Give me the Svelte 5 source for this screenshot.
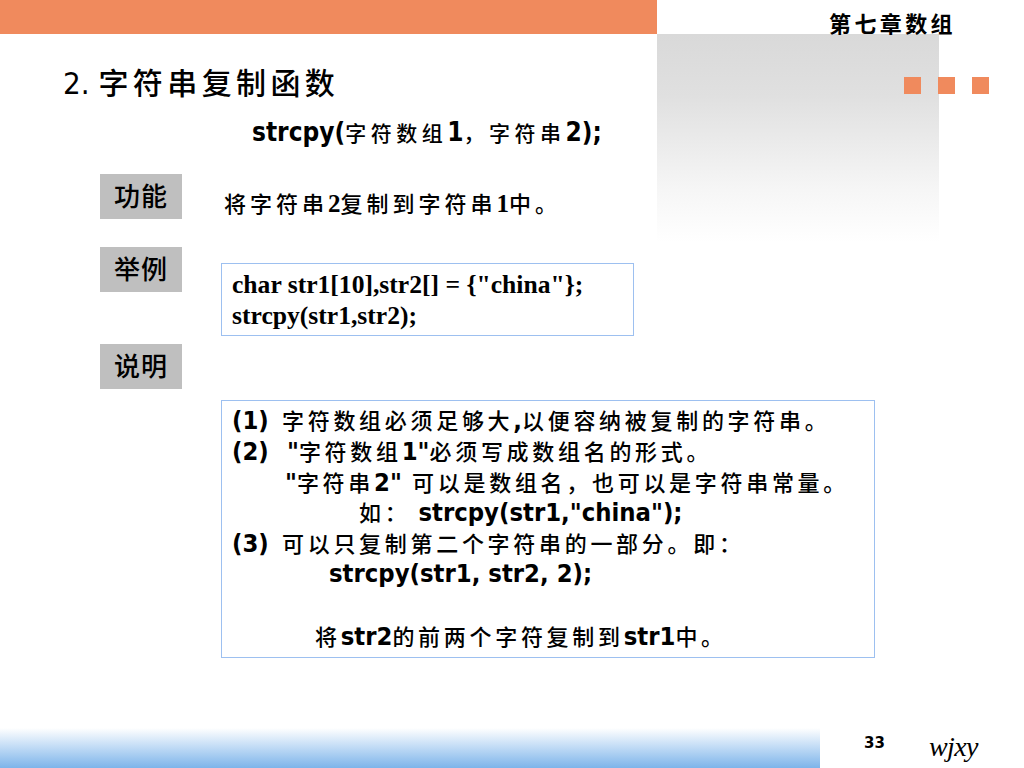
<script>
  const squares = [1, 2, 3];
</script>

<svelte:head>
  <title>字符串复制函数</title>
</svelte:head>

<div class="slide">
  <div class="shade"></div>
  <div class="dots">
    {#each squares as s}
      <i class="dot"></i>
    {/each}
  </div>

  <header class="top">
    <div class="bar"></div>
    <div class="chapter cn">第七章数组</div>
  </header>

  <main class="content">
    <h1><span class="num">2.</span> <span class="cn">字符串复制函数</span></h1>
    <div class="proto"><b>strcpy(</b><span class="cn">字符数组</span><b>1</b><span class="cn">，字符串</span><b>2);</b></div>

    <section class="row first">
      <div class="tag cn">功能</div>
      <p class="desc cn">将字符串<b>2</b>复制到字符串<b>1</b>中。</p>
    </section>

    <section class="row second">
      <div class="tag cn">举例</div>
      <div class="code">
        <div>char str1[10],str2[] = {'{'}"china"{'}'};</div>
        <div>strcpy(str1,str2);</div>
      </div>
    </section>

    <section class="row third">
      <div class="tag cn">说明</div>
    </section>

    <div class="notes">
      <div><b class="mark">(1)</b><span class="cn">字符数组必须足够大</span><b>,</b><span class="cn">以便容纳被复制的字符串。</span></div>
      <div><b class="mark">(2)</b><b class="gap">"</b><span class="cn">字符数组</span><b>1"</b><span class="cn">必须写成数组名的形式。</span></div>
      <div class="in1"><b>"</b><span class="cn">字符串</span><b>2"</b> <span class="cn gap3">可以是数组名，也可以是字符串常量。</span></div>
      <div class="in2"><span class="cn">如：</span><b class="gap2">strcpy(str1,"china");</b></div>
      <div><b class="mark">(3)</b><span class="cn">可以只复制第二个字符串的一部分。即：</span></div>
      <div class="in3"><b>strcpy(str1, str2, 2);</b></div>
      <div></div>
      <div class="in4"><span class="cn">将</span><b>str2</b><span class="cn">的前两个字符复制到</span><b>str1</b><span class="cn">中。</span></div>
    </div>
  </main>

  <footer class="bottom">
    <div class="strip"></div>
    <div class="page">33</div>
    <div class="sign">wjxy</div>
  </footer>
</div>

<style>
  :global(body) {
    margin: 0;
    background: #fff;
  }
  .slide {
    position: relative;
    width: 1024px;
    height: 768px;
    overflow: hidden;
    color: #000;
    font-family: "DejaVu Sans", "Noto Sans CJK SC", sans-serif;
    font-stretch: condensed;
    display: flex;
    flex-direction: column;
  }
  .cn {
    font-family: "Noto Sans CJK SC", sans-serif;
    font-weight: 500;
  }

  /* background decoration */
  .shade {
    position: absolute;
    left: 657px;
    top: 34px;
    width: 282px;
    height: 208px;
    background: linear-gradient(#d9d9d9, #e0e0e0 30%, #f6f6f6 75%, #fff);
  }
  .dots {
    position: absolute;
    left: 904px;
    top: 77px;
    display: flex;
    gap: 17px;
  }
  .dot {
    width: 17px;
    height: 17px;
    background: #f08a5d;
  }

  .top {
    position: relative;
    display: flex;
    height: 34px;
    flex: none;
  }
  .bar {
    width: 657px;
    background: #f08a5d;
  }
  .chapter {
    margin-left: 172px;
    font-size: 22px;
    line-height: 44px;
    letter-spacing: 3.4px;
    font-weight: 700;
    white-space: nowrap;
  }

  .content {
    position: relative;
    flex: 1;
    padding-left: 63px;
  }
  h1 {
    margin: 28px 0 0;
    height: 38px;
    font-size: 31px;
    line-height: 38px;
    font-weight: 400;
    white-space: nowrap;
  }
  h1 .cn {
    font-size: 30px;
    letter-spacing: 4.4px;
  }
  .proto {
    margin: 17px 0 0 189px;
    height: 30px;
    font-size: 26px;
    line-height: 30px;
    white-space: nowrap;
  }
  .proto .cn {
    font-size: 21px;
    letter-spacing: 4.5px;
  }

  .row {
    display: flex;
    margin-left: 37px;
  }
  .first {
    margin-top: 27px;
  }
  .second {
    margin-top: 27px;
  }
  .third {
    margin-top: 8px;
  }
  .tag {
    flex: none;
    width: 82px;
    height: 45px;
    background: #bfbfbf;
    text-align: center;
    font-size: 26px;
    line-height: 41px;
    letter-spacing: 1px;
  }
  .desc {
    margin: 10px 0 0 42px;
    height: 36px;
    font-size: 22px;
    line-height: 36px;
    letter-spacing: 4px;
    white-space: nowrap;
  }
  .desc b {
    font-family: "Liberation Serif", serif;
    font-stretch: normal;
    font-size: 25px;
    letter-spacing: 0;
  }

  .code {
    margin: 16px 0 0 39px;
    box-sizing: border-box;
    width: 413px;
    height: 73px;
    padding: 5px 10px 0;
    border: 1px solid #9dc0f0;
    font-family: "Liberation Serif", serif;
    font-stretch: normal;
    font-size: 25.6px;
    line-height: 31px;
    font-weight: 700;
    white-space: nowrap;
  }

  .notes {
    box-sizing: border-box;
    margin: 11px 0 0 158px;
    width: 654px;
    height: 258px;
    padding: 3px 10px 0;
    border: 1px solid #9dc0f0;
    font-size: 25.4px;
    line-height: 30.8px;
    white-space: nowrap;
  }
  .notes > div {
    height: 30.8px;
  }
  .notes .cn {
    font-size: 22px;
    letter-spacing: 3.7px;
  }
  .mark {
    display: inline-block;
    width: 50px;
  }
  .gap {
    margin-left: 5px;
  }
  .gap2 {
    margin-left: 8px;
  }
  .gap3 {
    margin-left: 3px;
  }
  .in1 {
    padding-left: 53px;
  }
  .in2 {
    padding-left: 127px;
  }
  .in3 {
    padding-left: 97px;
  }
  .in4 {
    padding-left: 83px;
  }

  .bottom {
    position: relative;
    display: flex;
    align-items: flex-end;
    height: 40px;
    flex: none;
  }
  .strip {
    width: 820px;
    height: 40px;
    background: linear-gradient(#fff, #7db4ea);
  }
  .page {
    margin: 0 0 16px 44px;
    font-size: 15px;
    line-height: 18px;
    font-weight: 700;
    font-stretch: normal;
    width: 65px;
  }
  .sign {
    margin-bottom: 4px;
    font-family: "Liberation Serif", serif;
    font-stretch: normal;
    font-style: italic;
    font-size: 28px;
    line-height: 34px;
    letter-spacing: -0.6px;
  }
</style>
